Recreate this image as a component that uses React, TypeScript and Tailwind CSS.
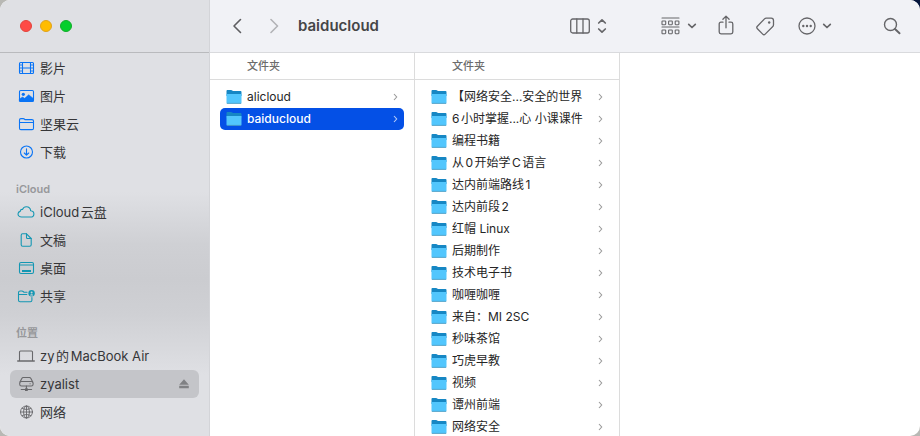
import React from "react";

type IconProps = { children: React.ReactNode; w?: number; h?: number };

function Icon({ children, w = 18, h = 16 }: IconProps) {
  return (
    <svg
      width={w}
      height={h}
      viewBox={`0 0 ${w} ${h}`}
      fill="none"
      stroke="currentColor"
      strokeWidth="1.1"
      strokeLinecap="round"
      strokeLinejoin="round"
      aria-hidden="true"
      className="shrink-0"
    >
      {children}
    </svg>
  );
}

const FilmIcon = () => (
  <Icon>
    <rect x="2.500" y="2.500" width="14" height="11" rx="1" />
    <path d="M5.500 2.500v11M13.500 2.500v11M5.500 8h8" />
    <path d="M2.500 5h3M2.500 8h3M2.500 11h3M13.500 5h3M13.500 8h3M13.500 11h3" strokeWidth="0.900" />
  </Icon>
);

const PhotoIcon = () => (
  <Icon>
    <rect x="2.500" y="2.500" width="14" height="11" rx="1.200" />
    <circle cx="6.300" cy="6.300" r="1.600" fill="currentColor" stroke="none" />
    <path
      d="M2.700 10.800l2.800-1.700 2.200 1.200 4-3.600 4.600 3.700v3H2.700z"
      fill="currentColor"
      strokeWidth="0.500"
    />
  </Icon>
);

const FolderOutlineIcon = () => (
  <Icon>
    <path d="M2.500 12.200V4c0-.9.500-1.400 1.400-1.400h2.300c.5 0 .8.100 1.100.4l.6.600h7c1 0 1.600.5 1.600 1.500v7.100c0 .9-.5 1.400-1.400 1.400H3.900c-.9 0-1.400-.5-1.400-1.400z" />
    <path d="M2.500 6.500h14" />
  </Icon>
);

const DownloadIcon = () => (
  <Icon>
    <circle cx="9.500" cy="8" r="6" />
    <path d="M9.500 4.800v6.200M7.300 9l2.200 2.200L11.700 9" />
  </Icon>
);

const CloudIcon = () => (
  <Icon>
    <path d="M4.600 13C2.600 13 1 11.800 1 10.100c0-1.400.9-2.400 2.200-2.700C3.200 6 4.300 5.200 5.600 5.400 6.200 3.700 7.600 2.700 9.300 2.700c2.400 0 4.200 1.800 4.300 4.100 1.900.2 3.300 1.400 3.300 3.100 0 1.800-1.500 3.100-3.500 3.100z" />
  </Icon>
);

const DocumentIcon = () => (
  <Icon>
    <path d="M5.500 1.800h4l4.700 4.700v6.200c0 1-.5 1.500-1.500 1.500H5.700c-1 0-1.500-.5-1.500-1.500V3.300c0-1 .3-1.500 1.300-1.500z" />
    <path d="M9.500 1.800v3.700c0 .7.300 1 1 1h3.700" />
  </Icon>
);

const DesktopIcon = () => (
  <Icon>
    <rect x="2.500" y="2.500" width="14" height="11" rx="1.500" />
    <path d="M2.500 5h14" />
    <path d="M5 11h9" strokeWidth="1.800" strokeLinecap="butt" />
  </Icon>
);

const SharedIcon = () => (
  <Icon>
    <path d="M10 4.200H6.800l-.7-.7c-.3-.3-.6-.5-1.100-.5H3.200C2.100 3 1.500 3.500 1.500 4.500v7.700c0 1 .6 1.500 1.600 1.500h10.300c1 0 1.500-.5 1.500-1.500V9.500M1.500 6.500h8.300" />
    <circle cx="14.600" cy="5.200" r="3.200" fill="currentColor" stroke="none" />
    <circle cx="14.600" cy="4.400" r="1" fill="#cfd0d4" stroke="none" />
    <path d="M13 7.400c.2-1.700 3-1.700 3.200 0z" fill="#cfd0d4" stroke="none" />
  </Icon>
);

const LaptopIcon = () => (
  <Icon>
    <path d="M2.500 12.500V4c0-.7.300-1 1-1h11c.7 0 1 .3 1 1v8.500" />
    <path d="M.7 13h16.600" strokeWidth="1.300" />
  </Icon>
);

const DriveIcon = () => (
  <Icon>
    <path d="M3 6L4.800 2.500c.3-.6.800-1 1.500-1h6.100c.7 0 1.200.4 1.500 1L15.700 6" />
    <rect x="2.700" y="5.500" width="13.400" height="4.500" rx="1.800" />
    <path d="M13 7.800h.2M9.400 10v4.500M4.200 13.500h10.400" />
    <rect x="8" y="12.300" width="2.800" height="2.600" rx="0.500" fill="currentColor" stroke="none" />
  </Icon>
);

const NetworkIcon = () => (
  <Icon>
    <g strokeWidth="0.900">
      <circle cx="9.500" cy="8" r="6" />
      <ellipse cx="9.500" cy="8" rx="2.900" ry="6" />
      <path d="M9.500 2v12M3.500 8h12M5.100 4.300c2.400 1.600 6.400 1.600 8.800 0M5.100 11.700c2.400-1.600 6.400-1.600 8.800 0" />
    </g>
  </Icon>
);

const EjectIcon = () => (
  <svg width="10" height="10" viewBox="0 0 10 10" fill="currentColor" aria-hidden="true">
    <path d="M5 .3L9.800 5.800H.2zM.2 6.800h9.600v2.500H.2z" />
  </svg>
);

const FolderIcon = () => (
  <svg width="16" height="14" viewBox="0 0 16 14" aria-hidden="true" className="shrink-0">
    <path d="M.5 1C.5.400.8 0 1.400 0h3.700c.5 0 .8.300 1.200.600l.6.400h7.700c.6 0 .9.300.9.900V6H.5z" fill="#1687c4" />
    <path d="M.5 4h15v8.700c0 .5-.3.800-.9.800H1.400c-.6 0-.9-.3-.9-.8z" fill="#52c6fd" />
    <path d="M.8 13.400h14.400" stroke="#4897bd" strokeWidth="0.800" />
  </svg>
);

const RowChevron = () => (
  <svg width="5" height="8" viewBox="0 0 5 8" fill="none" stroke="currentColor" strokeWidth="1.100" aria-hidden="true" className="shrink-0">
    <path d="M1 1l2.700 3L1 7" />
  </svg>
);

const DownChevron = () => (
  <svg width="10" height="6" viewBox="0 0 10 6" fill="none" stroke="currentColor" strokeWidth="1.700" strokeLinecap="round" strokeLinejoin="round" aria-hidden="true">
    <path d="M1.700 1.300L5 4.500l3.300-3.200" />
  </svg>
);

type Place = { label: string; icon: React.ReactNode; selected?: boolean };
type Section = { title?: string; color: string; places: Place[] };

const sections: Section[] = [
  {
    color: "text-[#0a74f5]",
    places: [
      { label: "影片", icon: <FilmIcon /> },
      { label: "图片", icon: <PhotoIcon /> },
      { label: "坚果云", icon: <FolderOutlineIcon /> },
      { label: "下载", icon: <DownloadIcon /> },
    ],
  },
  {
    title: "iCloud",
    color: "text-[#1497b3]",
    places: [
      { label: "iCloud云盘", icon: <CloudIcon /> },
      { label: "文稿", icon: <DocumentIcon /> },
      { label: "桌面", icon: <DesktopIcon /> },
      { label: "共享", icon: <SharedIcon /> },
    ],
  },
  {
    title: "位置",
    color: "text-[#68686b]",
    places: [
      { label: "zy的MacBook Air", icon: <LaptopIcon /> },
      { label: "zyalist", icon: <DriveIcon />, selected: true },
      { label: "网络", icon: <NetworkIcon /> },
    ],
  },
];

function Sidebar() {
  return (
    <aside className="flex w-[210px] shrink-0 flex-col border-r border-[#d3d4d8] bg-[linear-gradient(#dfe0e4_44%,#cfd0d4_56%,#cbccd0_64%,#cfd0d4_72%,#dfe0e4_86%)]">
      <div className="flex h-[53px] shrink-0 items-center gap-2 border-b border-[#b9babd] pl-5">
        <button aria-label="关闭" className="size-3 rounded-full border border-[#e2443c] bg-[#fe4b46]" />
        <button aria-label="最小化" className="size-3 rounded-full border border-[#e0a21c] bg-[#ffbc00]" />
        <button aria-label="缩放" className="size-3 rounded-full border border-[#12ac2a] bg-[#05cf2c]" />
      </div>
      <nav className="pt-px">
        {sections.map((section, i) => (
          <section key={i}>
            {section.title && (
              <h2 className="pt-[14px] pl-4 text-[11px] leading-[18px] font-semibold text-[#97989b]">
                {section.title}
              </h2>
            )}
            <ul>
              {section.places.map((place) => (
                <li
                  key={place.label}
                  className={`mx-[10px] flex h-7 items-center rounded-md pr-[10px] ${place.selected ? "bg-[#c4c5c9]" : ""}`}
                >
                  <button className="flex flex-1 items-center gap-1 pl-2 text-left text-[13px] leading-5 whitespace-nowrap text-[#363638]">
                    <span className={`-ml-px ${section.color}`}>{place.icon}</span>
                    <span className="pl-px">{place.label}</span>
                  </button>
                  {place.selected && (
                    <button aria-label="推出" className="text-[#808184]">
                      <EjectIcon />
                    </button>
                  )}
                </li>
              ))}
            </ul>
          </section>
        ))}
      </nav>
    </aside>
  );
}

function Toolbar() {
  return (
    <header className="flex h-[53px] shrink-0 items-center border-b border-[#d9dadd] bg-[#f1f2f6] pr-[19px] pl-[22px] text-[#666669]">
      <button aria-label="后退" className="text-[#5e5e61]">
        <Icon w={10} h={16}>
          <path d="M8.500 1.500L2 8l6.500 6.500" strokeWidth="1.600" />
        </Icon>
      </button>
      <button aria-label="前进" className="ml-7 text-[#b2b3b6]">
        <Icon w={10} h={16}>
          <path d="M1 1.500L7.500 8 1 14.500" strokeWidth="1.600" />
        </Icon>
      </button>
      <h1 className="ml-[18px] flex-1 text-[15px] leading-5 font-semibold text-[#454547]">baiducloud</h1>
      <button aria-label="显示方式" className="flex items-center gap-[7px]">
        <Icon w={20} h={16}>
          <rect x="0.700" y="1" width="18.600" height="14" rx="2" strokeWidth="1.300" />
          <path d="M6.800 1v14M13 1v14" strokeWidth="1.300" />
        </Icon>
        <Icon w={10} h={16}>
          <path d="M1.700 5L5 1.800 8.300 5M1.700 11L5 14.200 8.300 11" strokeWidth="1.700" />
        </Icon>
      </button>
      <button aria-label="分组" className="ml-[54px] flex items-center gap-[7px]">
        <Icon w={19} h={18}>
          <path d="M1 1h17M1 10h17" />
          <g>
            <rect x="1" y="4" width="3.700" height="3.700" rx="0.600" />
            <rect x="7.600" y="4" width="3.700" height="3.700" rx="0.600" />
            <rect x="14.200" y="4" width="3.700" height="3.700" rx="0.600" />
            <rect x="1" y="13" width="3.700" height="3.700" rx="0.600" />
            <rect x="7.600" y="13" width="3.700" height="3.700" rx="0.600" />
            <rect x="14.200" y="13" width="3.700" height="3.700" rx="0.600" />
          </g>
        </Icon>
        <DownChevron />
      </button>
      <button aria-label="共享" className="ml-[21px]">
        <Icon w={16} h={22}>
          <path d="M5 7.200H3c-1.200 0-1.800.6-1.800 1.800v8c0 1.200.6 1.800 1.800 1.800h10c1.200 0 1.800-.6 1.800-1.800V9c0-1.200-.6-1.800-1.800-1.800h-2M8 12.800V1.400M4.900 4.200L8 1.100l3.100 3.100" strokeWidth="1.300" />
        </Icon>
      </button>
      <button aria-label="标签" className="ml-[21px]">
        <Icon w={20} h={20}>
          <path d="M11.200 2.200h5c1.500 0 2.300.8 2.300 2.300v4.300c0 .7-.2 1.200-.7 1.700l-7.600 7.600c-.8.8-1.700.8-2.500 0l-5.300-5.300c-.8-.8-.8-1.700 0-2.500l7.100-7.400c.5-.5 1-.7 1.700-.7z" strokeWidth="1.300" />
          <circle cx="14.200" cy="6.500" r="1.200" fill="currentColor" stroke="none" />
        </Icon>
      </button>
      <button aria-label="操作" className="ml-[23px] flex items-center gap-[6px]">
        <Icon w={18} h={18}>
          <circle cx="9" cy="9" r="8" strokeWidth="1.300" />
          <g fill="currentColor" stroke="none">
            <circle cx="5.300" cy="9" r="1.200" />
            <circle cx="9" cy="9" r="1.200" />
            <circle cx="12.700" cy="9" r="1.200" />
          </g>
        </Icon>
        <DownChevron />
      </button>
      <button aria-label="搜索" className="ml-[51px]">
        <Icon w={18} h={18}>
          <circle cx="7.500" cy="7.500" r="6" strokeWidth="1.400" />
          <path d="M12 12l4.500 4.200" strokeWidth="2" />
        </Icon>
      </button>
    </header>
  );
}

type Folder = { name: string; selected?: boolean };

const columns: Folder[][] = [
  [{ name: "alicloud" }, { name: "baiducloud", selected: true }],
  [
    { name: "【网络安全...安全的世界" },
    { name: "6小时掌握...心 小课课件" },
    { name: "编程书籍" },
    { name: "从0开始学C语言" },
    { name: "达内前端路线1" },
    { name: "达内前段2" },
    { name: "红帽 Linux" },
    { name: "后期制作" },
    { name: "技术电子书" },
    { name: "咖喱咖喱" },
    { name: "来自：MI 2SC" },
    { name: "秒味茶馆" },
    { name: "巧虎早教" },
    { name: "视频" },
    { name: "谭州前端" },
    { name: "网络安全" },
  ],
];

function Column({ folders }: { folders: Folder[] }) {
  return (
    <section className="w-[205px] shrink-0 border-r border-[#dcdcdc]">
      <h2 className="h-[27px] border-b border-[#dcdcdc] pl-[37px] text-[11px] leading-[26px] font-medium text-[#6c6c6c]">
        文件夹
      </h2>
      <ul className="px-[10px] pt-[6px]">
        {folders.map((folder) => (
          <li key={folder.name}>
            <button
              className={`flex h-[22px] w-full items-center rounded-[5px] px-[6px] text-left text-xs whitespace-nowrap ${
                folder.selected ? "bg-[#0450e6] font-medium text-white" : "text-[#262626]"
              }`}
            >
              <FolderIcon />
              <span className="flex-1 pl-[5px]">{folder.name}</span>
              <span className={folder.selected ? "text-[#b9cdf7]" : "text-[#9a9a9a]"}>
                <RowChevron />
              </span>
            </button>
          </li>
        ))}
      </ul>
    </section>
  );
}

export default function App() {
  return (
    <div className="h-screen bg-[linear-gradient(to_top_right,#b8b8b4_80%,#04153c_95%)] font-[Inter,'Noto_Sans_CJK_SC',sans-serif] [text-autospace:normal]">
      <div className="flex h-full overflow-hidden rounded-[10px] bg-white">
        <Sidebar />
        <main className="flex min-w-0 flex-1 flex-col">
          <Toolbar />
          <div className="flex min-h-0 flex-1">
            {columns.map((folders, i) => (
              <Column key={i} folders={folders} />
            ))}
          </div>
        </main>
      </div>
    </div>
  );
}
